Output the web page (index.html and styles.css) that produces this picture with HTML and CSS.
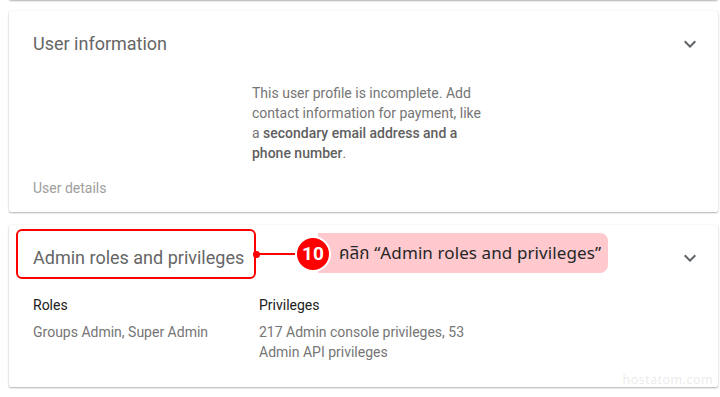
FILE: index.html
```html
<!DOCTYPE html>
<html lang="th">
<head>
    <meta charset="UTF-8">
    <meta name="viewport" content="width=device-width, initial-scale=1.0">
    <title>Admin roles and privileges</title>
    <link rel="stylesheet" href="styles.css">
</head>
<body>
    <div class="card card-prev"></div>

    <div class="card">
        <div class="card-head">
            <h2 class="card-title">User information</h2>
            <svg class="chevron" viewBox="0 0 24 24" width="24" height="24"><path d="M7.41 8.59L12 13.17l4.59-4.58L18 10l-6 6-6-6 1.41-1.41z"/></svg>
        </div>
        <p class="notice">This user profile is incomplete. Add contact information for payment, like a <strong>secondary email address and a phone number</strong>.</p>
        <div class="card-foot">User details</div>
    </div>

    <div class="card card-admin">
        <div class="card-head">
            <h2 class="card-title">Admin roles and privileges</h2>
            <svg class="chevron" viewBox="0 0 24 24" width="24" height="24"><path d="M7.41 8.59L12 13.17l4.59-4.58L18 10l-6 6-6-6 1.41-1.41z"/></svg>
        </div>
        <div class="details">
            <div class="col">
                <div class="label">Roles</div>
                <div class="value">Groups Admin, Super Admin</div>
            </div>
            <div class="col">
                <div class="label">Privileges</div>
                <div class="value">217 Admin console privileges, 53 Admin API privileges</div>
            </div>
        </div>

        <!-- คำอธิบายขั้นตอน -->
        <div class="mark-box"></div>
        <div class="mark-line"></div>
        <div class="mark-dot"></div>
        <div class="step-pill">คลิก “Admin roles and privileges”</div>
        <div class="step-num">10</div>
        <div class="watermark">hostatom.com</div>
    </div>
</body>
</html>
```

FILE: styles.css
```css
/* 基本 */
body {
    margin: 0;
    padding: 0 2px 0 9px;
    background-color: #ffffff;
    font-family: 'Roboto', 'Liberation Sans', sans-serif;
    color: #757575;
}

/* カード */
.card {
    position: relative;
    background-color: #ffffff;
    border-radius: 2px;
    box-shadow: 0 1px 2px rgba(0,0,0,0.3), 0 0 1px rgba(0,0,0,0.12);
    margin-bottom: 13px;
}
.card-prev {
    height: 20px;
    margin-top: -20px;
    margin-bottom: 11px;
}

.card-head {
    display: flex;
    align-items: center;
    justify-content: space-between;
    height: 65px;
    padding: 0 16px 1px 24px;
}
.card-title {
    margin: 0;
    font-size: 18px;
    font-weight: 400;
    color: #666666;
}
.chevron {
    fill: #5f6368;
}

/* 説明文 */
.notice {
    width: 236px;
    margin: 6px 0 0 243px;
    font-size: 14px;
    line-height: 20px;
}
.notice strong {
    font-weight: 500;
    color: #5f5f5f;
}
.card-foot {
    padding: 15px 24px 14px;
    font-size: 14px;
    line-height: 20px;
    color: #9e9e9e;
}

/* 権限 */
.details {
    display: grid;
    grid-template-columns: 226px 220px;
    padding: 4px 24px 25px;
    font-size: 14px;
    line-height: 20px;
}
.label {
    color: #212121;
    margin-bottom: 7px;
}

/* 注釈 */
.mark-box {
    position: absolute;
    left: 7px;
    top: 4px;
    width: 240px;
    height: 50px;
    box-sizing: border-box;
    border: 2px solid #ff0000;
    border-radius: 6px;
}
.mark-line {
    position: absolute;
    left: 247px;
    top: 28px;
    width: 44px;
    height: 2px;
    background-color: #ff0000;
}
.mark-dot {
    position: absolute;
    left: 244px;
    top: 26px;
    width: 7px;
    height: 7px;
    border-radius: 50%;
    background-color: #ff0000;
}
.step-pill {
    position: absolute;
    left: 309px;
    top: 8px;
    width: 290px;
    height: 40px;
    box-sizing: border-box;
    padding: 2px 0 0 21px;
    border-radius: 0 8px 8px 0;
    background-color: #ffc9ce;
    color: #262626;
    font-family: 'Noto Sans Thai', 'Noto Sans', 'DejaVu Sans', sans-serif;
    font-size: 17px;
    line-height: 38px;
    letter-spacing: 0.1px;
    white-space: nowrap;
}
.step-num {
    position: absolute;
    left: 286px;
    top: 11px;
    width: 36px;
    height: 36px;
    box-sizing: border-box;
    border: 2px solid #ffffff;
    border-radius: 50%;
    background-color: #ff0000;
    color: #ffffff;
    font-weight: 700;
    font-size: 19px;
    line-height: 32px;
    text-align: center;
}
.watermark {
    position: absolute;
    right: 5px;
    bottom: -1px;
    font-family: 'Open Sans', 'DejaVu Sans', sans-serif;
    font-size: 12.5px;
    letter-spacing: 0.5px;
    color: #ebebeb;
}
```
